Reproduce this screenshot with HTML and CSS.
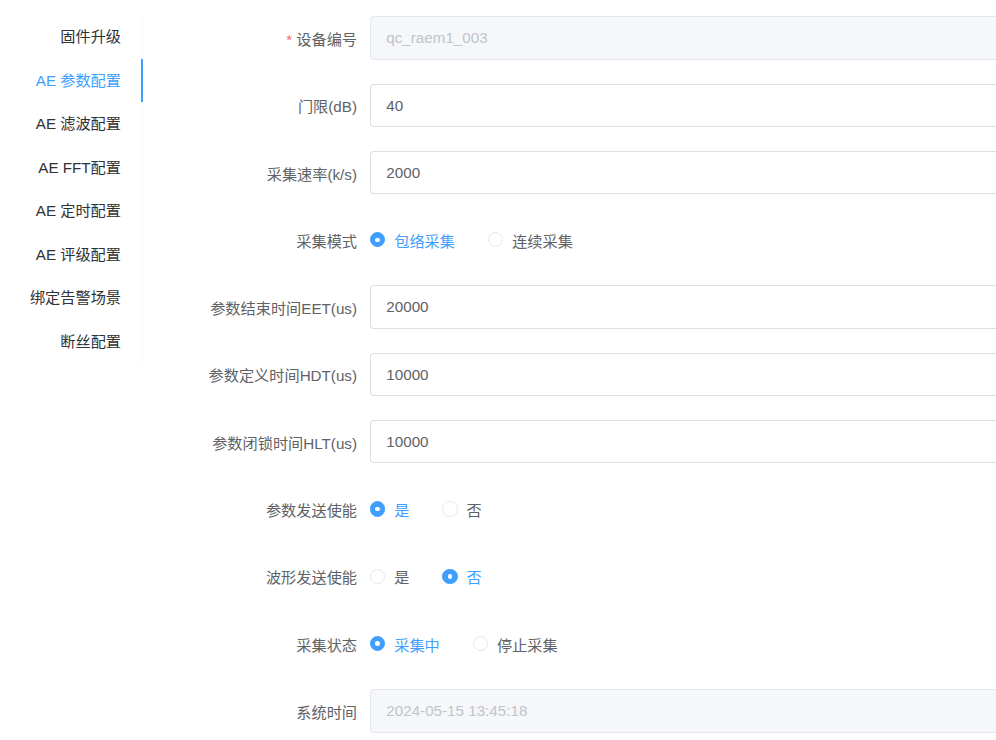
FILE: index.html
```html
<!DOCTYPE html>
<html lang="zh">
<head>
<meta charset="utf-8">
<link rel="stylesheet" href="styles.css">
</head>
<body>
<div class="page">
  <nav class="tabs">
    <div class="tab">固件升级</div>
    <div class="tab active">AE 参数配置</div>
    <div class="tab">AE 滤波配置</div>
    <div class="tab">AE FFT配置</div>
    <div class="tab">AE 定时配置</div>
    <div class="tab">AE 评级配置</div>
    <div class="tab">绑定告警场景</div>
    <div class="tab">断丝配置</div>
  </nav>
  <form class="form">
    <div class="row">
      <label class="label"><span class="req">*</span>设备编号</label>
      <div class="input disabled">qc_raem1_003</div>
    </div>
    <div class="row">
      <label class="label">门限(dB)</label>
      <div class="input">40</div>
    </div>
    <div class="row">
      <label class="label">采集速率(k/s)</label>
      <div class="input">2000</div>
    </div>
    <div class="row">
      <label class="label">采集模式</label>
      <div class="radios">
        <span class="radio checked"><span class="dot"></span>包络采集</span>
        <span class="radio"><span class="dot"></span>连续采集</span>
      </div>
    </div>
    <div class="row">
      <label class="label">参数结束时间EET(us)</label>
      <div class="input">20000</div>
    </div>
    <div class="row">
      <label class="label">参数定义时间HDT(us)</label>
      <div class="input">10000</div>
    </div>
    <div class="row">
      <label class="label">参数闭锁时间HLT(us)</label>
      <div class="input">10000</div>
    </div>
    <div class="row">
      <label class="label">参数发送使能</label>
      <div class="radios">
        <span class="radio checked"><span class="dot"></span>是</span>
        <span class="radio"><span class="dot"></span>否</span>
      </div>
    </div>
    <div class="row">
      <label class="label">波形发送使能</label>
      <div class="radios">
        <span class="radio"><span class="dot"></span>是</span>
        <span class="radio checked"><span class="dot"></span>否</span>
      </div>
    </div>
    <div class="row">
      <label class="label">采集状态</label>
      <div class="radios">
        <span class="radio checked"><span class="dot"></span>采集中</span>
        <span class="radio"><span class="dot"></span>停止采集</span>
      </div>
    </div>
    <div class="row">
      <label class="label">系统时间</label>
      <div class="input disabled">2024-05-15 13:45:18</div>
    </div>
  </form>
</div>
</body>
</html>
```

FILE: styles.css
```css
* { box-sizing: border-box; }
html, body {
  margin: 0;
  padding: 0;
  background: #fff;
  overflow: hidden;
}
body {
  font-family: "Liberation Sans", "Noto Sans CJK SC", sans-serif;
  font-size: 15.2px;
  color: #606266;
}
.page {
  display: flex;
  align-items: flex-start;
  width: 996px;
  height: 740px;
}
.tabs {
  width: 143px;
  flex: none;
  margin-top: 15.3px;
  border-right: 2px solid #fafbfc;
  display: flex;
  flex-direction: column;
}
.tab {
  height: 43.5px;
  line-height: 43.5px;
  text-align: right;
  padding-right: 20px;
  color: #303133;
  margin-right: -2px;
  border-right: 2px solid transparent;
}
.tab.active {
  color: #409eff;
  border-right-color: #409eff;
}
.form {
  flex: 1;
  min-width: 0;
  margin: 16.3px 0 0;
  display: flex;
  flex-direction: column;
  gap: 23.9px;
}
.row {
  display: flex;
  align-items: center;
  height: 43.4px;
}
.label {
  width: 227px;
  flex: none;
  text-align: right;
  padding-right: 13px;
  color: #606266;
}
.req {
  color: #f56c6c;
  margin-right: 4px;
}
.input {
  flex: 1;
  min-width: 0;
  height: 43.4px;
  line-height: 41.4px;
  border: 1px solid #dcdfe6;
  border-right: none;
  border-radius: 4px 0 0 4px;
  padding-left: 15.3px;
  color: #606266;
  background: #fff;
}
.input.disabled {
  background: #f5f7fa;
  border-color: #e4e7ed;
  color: #c0c4cc;
}
.radios {
  display: flex;
  align-items: center;
  gap: 33px;
}
.radio {
  display: inline-flex;
  align-items: center;
  gap: 9px;
  color: #606266;
}
.dot {
  width: 15.2px;
  height: 15.2px;
  border-radius: 50%;
  border: 1px solid #e4e7ed;
  background: #fff;
  position: relative;
}
.radio.checked { color: #409eff; }
.radio.checked .dot {
  background: #409eff;
  border-color: #409eff;
}
.radio.checked .dot::after {
  content: "";
  position: absolute;
  left: 50%;
  top: 50%;
  width: 4.6px;
  height: 4.6px;
  margin: -2.3px 0 0 -2.3px;
  border-radius: 50%;
  background: #fff;
}
```
